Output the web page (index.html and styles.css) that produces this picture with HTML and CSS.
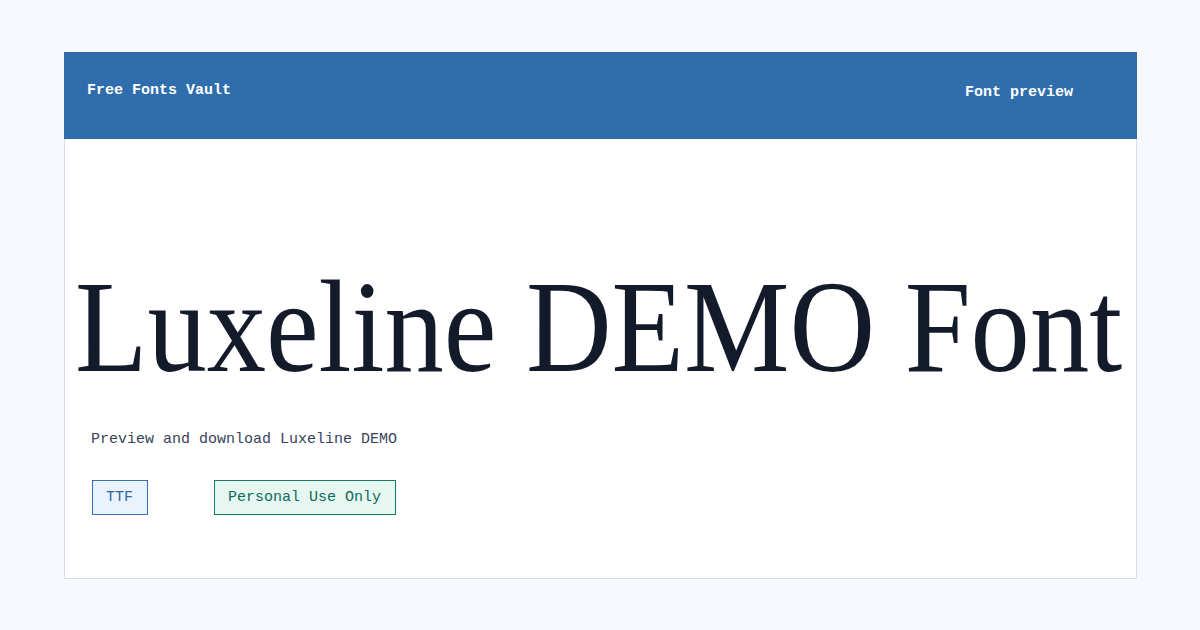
FILE: index.html
```html
<!DOCTYPE html>
<html lang="en">
<head>
    <meta charset="UTF-8">
    <meta name="viewport" content="width=device-width, initial-scale=1.0">
    <title>Luxeline DEMO - Free Fonts Vault</title>
    <link rel="stylesheet" href="styles.css">
</head>
<body>

    <div class="card">
        <div class="header">
            <div class="brand">Free Fonts Vault</div>
            <div class="section">Font preview</div>
        </div>

        <div class="preview">
            <h1 class="fontName">Luxeline DEMO Font</h1>
        </div>

        <div class="details">
            <p class="lead">Preview and download Luxeline DEMO</p>
            <div class="tags">
                <span class="tag tagFormat">TTF</span>
                <span class="tag tagLicense">Personal Use Only</span>
            </div>
        </div>
    </div>

</body>
</html>
```

FILE: styles.css
```css
body {
    margin: 0;
    padding: 52px 63px 50px 64px;
    background-color: #f6f9fd;
    font-family: "Liberation Mono", "DejaVu Sans Mono", monospace;
}

.card {
    background-color: #ffffff;
    border: 1px solid #d6dfeb;
    height: 527px;
    box-sizing: border-box;
}

.header {
    display: flex;
    justify-content: space-between;
    align-items: flex-start;
    height: 87px;
    margin: -1px -1px 0 -1px;
    padding: 0 64px 0 23px;
    background-color: #2f6dad;
    color: #ffffff;
    font-size: 15px;
    font-weight: bold;
}

.brand {
    margin-top: 30px;
}

.section {
    margin-top: 32px;
}

.preview {
    display: flex;
    justify-content: center;
    padding-top: 122px;
}

/* the face is narrow, so squeeze the fallback serif a little */
.fontName {
    margin: 0 0 0 -4px;
    font-family: "Liberation Serif", "Times New Roman", serif;
    font-weight: normal;
    font-size: 131px;
    line-height: 131px;
    white-space: nowrap;
    color: #131b2a;
    transform: scaleX(0.905);
}

.details {
    padding: 39px 26px 0 26px;
}

.lead {
    margin: 0;
    font-size: 15px;
    color: #38435a;
}

.tags {
    display: flex;
    gap: 66px;
    margin: 32px 0 0 1px;
}

.tag {
    padding: 8px 14px 8px 13px;
    font-size: 15px;
    border: 1px solid;
}

.tagFormat {
    background-color: #eaf3fd;
    border-color: #3572b0;
    color: #2a66a6;
}

.tagLicense {
    background-color: #e6f6f1;
    border-color: #1a7a68;
    color: #0d6b59;
}
```
